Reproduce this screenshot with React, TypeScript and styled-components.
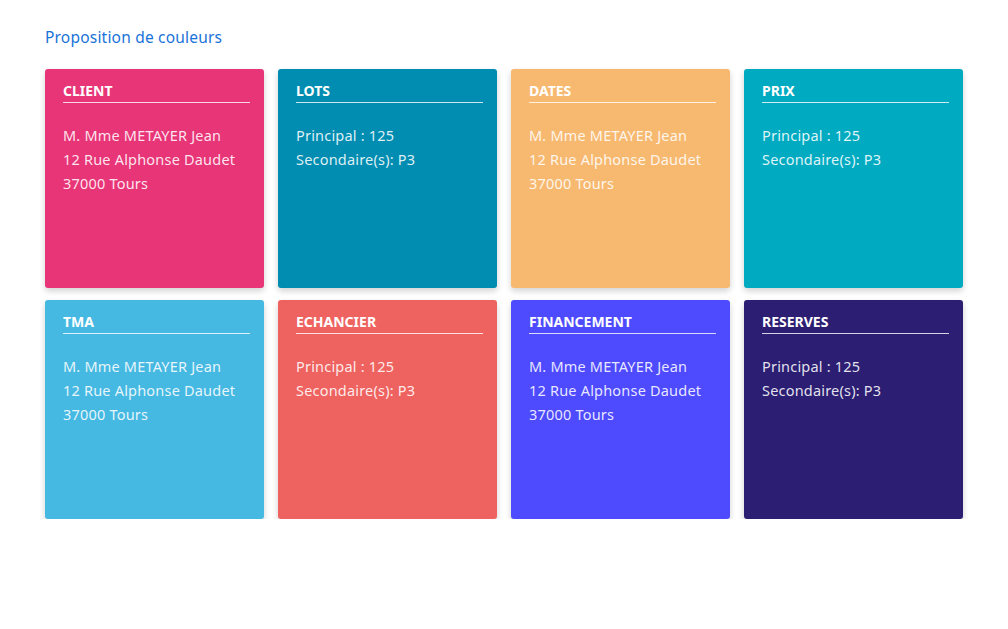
import React from "react";
import styled, { createGlobalStyle } from "styled-components";

const Global = createGlobalStyle`
  html, body { margin: 0; padding: 0; background: #fff; }
  body { font-family: "Noto Sans", "Open Sans", sans-serif; }
`;

const Page = styled.div`
  padding: 27px 45px 0 45px;
  width: 918px;
`;

const Title = styled.h1`
  margin: 0 0 22px 0;
  font-size: 15.5px;
  font-weight: 400;
  line-height: 20px;
  letter-spacing: 0.2px;
  color: #1a73d8;
`;

const Grid = styled.div`
  display: grid;
  grid-template-columns: repeat(4, 1fr);
  column-gap: 14px;
  row-gap: 12px;
`;

const Card = styled.section<{ $bg: string }>`
  height: 219px;
  box-sizing: border-box;
  padding: 12px 14px 0 18px;
  background: ${(p) => p.$bg};
  border-radius: 3px;
  box-shadow: 0 3px 6px rgba(0, 0, 0, 0.18);
  color: #fff;
`;

const CardTitle = styled.h2`
  margin: 0;
  padding-bottom: 2px;
  font-size: 14px;
  font-weight: 700;
  line-height: 19px;
  border-bottom: 1px solid rgba(255, 255, 255, 0.8);
`;

const Body = styled.div`
  margin-top: 20px;
  font-size: 14.5px;
  line-height: 24px;
  letter-spacing: 0.2px;
  color: rgba(255, 255, 255, 0.88);
`;

const Line = styled.div``;

const client = ["M. Mme METAYER Jean", "12 Rue Alphonse Daudet", "37000 Tours"];
const lots = ["Principal : 125", "Secondaire(s): P3"];

const cards = [
  { title: "CLIENT", bg: "#e83577", lines: client },
  { title: "LOTS", bg: "#008db1", lines: lots },
  { title: "DATES", bg: "#f7b970", lines: client },
  { title: "PRIX", bg: "#00abc2", lines: lots },
  { title: "TMA", bg: "#46b9e2", lines: client },
  { title: "ECHANCIER", bg: "#ee635f", lines: lots },
  { title: "FINANCEMENT", bg: "#4e4bfe", lines: client },
  { title: "RESERVES", bg: "#2c1f73", lines: lots },
];

export default function App() {
  return (
    <>
      <Global />
      <Page>
        <Title>Proposition de couleurs</Title>
        <Grid>
          {cards.map((c) => (
            <Card key={c.title} $bg={c.bg}>
              <CardTitle>{c.title}</CardTitle>
              <Body>
                {c.lines.map((l) => (
                  <Line key={l}>{l}</Line>
                ))}
              </Body>
            </Card>
          ))}
        </Grid>
      </Page>
    </>
  );
}
